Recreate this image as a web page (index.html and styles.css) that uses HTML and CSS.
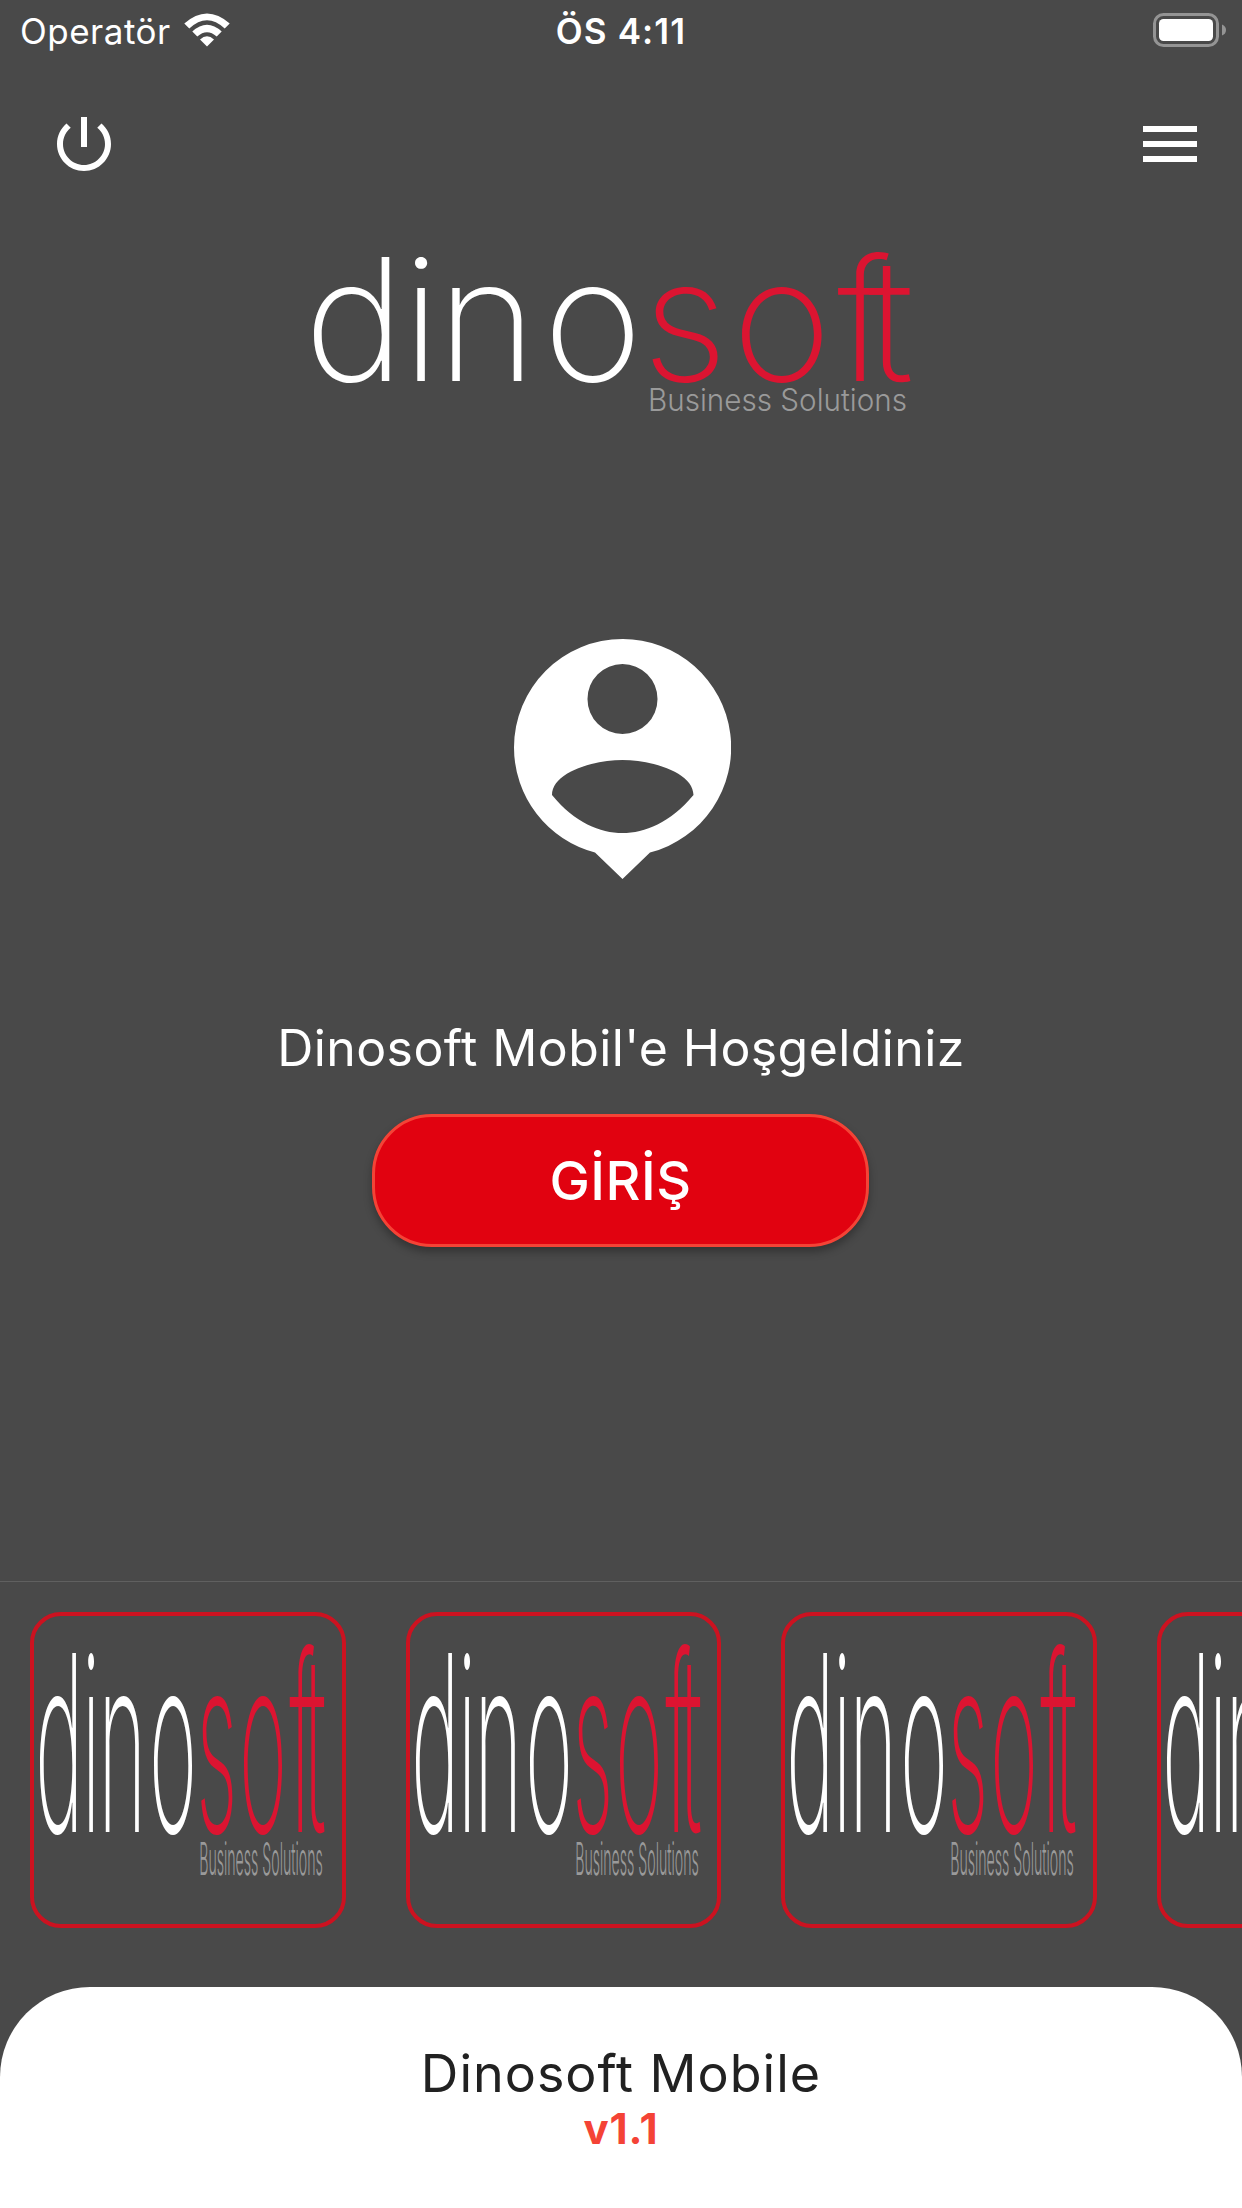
FILE: index.html
```html
<!DOCTYPE html>
<html lang="tr">
<head>
  <meta charset="UTF-8" />
  <meta name="viewport" content="width=device-width, initial-scale=1.0"/>
  <title>Dinosoft Mobile</title>
  <link rel="stylesheet" href="styles.css">
</head>
<body>
  <div class="screen">
    <div class="status-bar">
      <div class="carrier">
        <span>Operatör</span>
        <svg class="wifi" viewBox="0 0 46 34">
          <path d="M.3 10.500Q23-9.500 45.700 10.500L40.700 15.500Q23-1 5.300 15.500Z"/>
          <path d="M8.300 18.500Q23 5 37.700 18.500L32.700 23.500Q23 14.800 13.300 23.500Z"/>
          <path d="M16 26.500Q23 20 30 26.500L23 33.500Z"/>
        </svg>
      </div>
      <div class="time">ÖS 4:11</div>
      <svg class="battery" viewBox="0 0 74 34">
        <rect class="battery-case" x="1.500" y="1.500" width="63" height="31" rx="9"/>
        <rect x="6" y="6" width="54" height="22" rx="4.500"/>
        <path class="battery-tip" d="M69 11.500Q73 13 73 17T69 22.500Z"/>
      </svg>
    </div>

    <header class="toolbar">
      <svg class="icon" viewBox="0 0 24 24"><path d="M13 3h-2v10h2V3zm4.830 2.170l-1.420 1.420C17.990 7.860 19 9.810 19 12c0 3.870-3.130 7-7 7s-7-3.130-7-7c0-2.190 1.010-4.140 2.580-5.420L6.170 5.170C4.230 6.820 3 9.260 3 12c0 4.970 4.030 9 9 9s9-4.030 9-9c0-2.740-1.230-5.180-3.170-6.830z"/></svg>
      <svg class="icon" viewBox="0 0 24 24"><path d="M3 18h18v-2H3v2zm0-5h18v-2H3v2zm0-7v2h18V6H3z"/></svg>
    </header>

    <main class="welcome">
      <svg class="logo" viewBox="0 0 606 158" preserveAspectRatio="none">
        <text class="word" y="126" x="-8 90 125 231">dino</text>
        <text class="word red" y="126" x="330 420 525 556">soft</text>
        <text class="tagline" x="336" y="156" textLength="259" lengthAdjust="spacingAndGlyphs">Business Solutions</text>
      </svg>
      <svg class="person" viewBox="0 0 217 240">
        <path fill-rule="evenodd" d="M108.500 0A108.500 108.500 0 0 1 136 213.500L108.500 240L81 213.500A108.500 108.500 0 0 1 0 108.500A108.500 108.500 0 0 1 108.500 0ZM108.500 25a35 35 0 1 0 0 70a35 35 0 1 0 0-70ZM38 156C61 184 86 194 108.500 194S156 184 179.500 156C179.500 134 139 121 108.500 121S38 134 38 156Z"/>
      </svg>
      <p class="greeting">Dinosoft Mobil'e Hoşgeldiniz</p>
      <button class="login-btn">GİRİŞ</button>
    </main>

    <section class="cards">
      <div class="card">
        <svg class="card-logo" viewBox="0 0 606 158" preserveAspectRatio="none">
          <text class="word" y="126" x="-8 90 125 231">dino</text>
          <text class="word red" y="126" x="330 420 525 556">soft</text>
          <text class="tagline" x="336" y="156" textLength="259" lengthAdjust="spacingAndGlyphs">Business Solutions</text>
        </svg>
      </div>
      <div class="card">
        <svg class="card-logo" viewBox="0 0 606 158" preserveAspectRatio="none">
          <text class="word" y="126" x="-8 90 125 231">dino</text>
          <text class="word red" y="126" x="330 420 525 556">soft</text>
          <text class="tagline" x="336" y="156" textLength="259" lengthAdjust="spacingAndGlyphs">Business Solutions</text>
        </svg>
      </div>
      <div class="card">
        <svg class="card-logo" viewBox="0 0 606 158" preserveAspectRatio="none">
          <text class="word" y="126" x="-8 90 125 231">dino</text>
          <text class="word red" y="126" x="330 420 525 556">soft</text>
          <text class="tagline" x="336" y="156" textLength="259" lengthAdjust="spacingAndGlyphs">Business Solutions</text>
        </svg>
      </div>
      <div class="card">
        <svg class="card-logo" viewBox="0 0 606 158" preserveAspectRatio="none">
          <text class="word" y="126" x="-8 90 125 231">dino</text>
          <text class="word red" y="126" x="330 420 525 556">soft</text>
          <text class="tagline" x="336" y="156" textLength="259" lengthAdjust="spacingAndGlyphs">Business Solutions</text>
        </svg>
      </div>
    </section>

    <footer class="footer">
      <div class="app-name">Dinosoft Mobile</div>
      <div class="version">v1.1</div>
    </footer>
  </div>
</body>
</html>
```
FILE: styles.css
```css
* {
  box-sizing: border-box;
}
body {
  margin: 0;
  background: #494949;
  color: #fff;
  font-family: Inter, "Liberation Sans", sans-serif;
}
.screen {
  display: flex;
  flex-direction: column;
  height: 2208px;
  overflow: hidden;
}
svg {
  display: block;
  fill: #fff;
}
.status-bar {
  display: grid;
  grid-template-columns: 1fr auto 1fr;
  align-items: center;
  height: 62px;
  padding: 0 15px;
  font-size: 35px;
}
.carrier {
  display: flex;
  align-items: center;
  gap: 13px;
  padding-left: 5px;
  letter-spacing: 0.5px;
}
.wifi {
  width: 46px;
  height: 34px;
  margin-bottom: 3px;
}
.time {
  font-weight: 600;
  letter-spacing: 1.1px;
}
.battery {
  justify-self: end;
  width: 74px;
  height: 34px;
  margin-bottom: 2px;
}
.battery-case {
  fill: none;
  stroke: #949494;
  stroke-width: 3;
}
.battery-tip {
  fill: #949494;
}
.toolbar {
  display: flex;
  justify-content: space-between;
  height: 193px;
  padding: 46px 36px 0 48px;
}
.icon {
  width: 72px;
  height: 72px;
}
.welcome {
  display: flex;
  flex-direction: column;
  align-items: center;
  height: 1326px;
}
.logo {
  width: 606px;
  height: 158px;
  margin-right: 12px;
  overflow: visible;
}
.word {
  font-size: 170px;
  font-weight: 200;
}
.red {
  fill: #dc1431;
}
.tagline {
  font-size: 31px;
  font-weight: 300;
  fill: #9a9a9a;
}
.person {
  width: 217px;
  height: 240px;
  margin: 226px 0 0 2px;
}
.greeting {
  margin: 137px 0 0;
  font-size: 50px;
  line-height: 64px;
  letter-spacing: 0.4px;
  white-space: nowrap;
}
.login-btn {
  width: 497px;
  height: 133px;
  margin: 34px 1px 0 0;
  border: 3px solid #f44336;
  border-radius: 60px;
  background: #e10210;
  color: #fff;
  font-family: inherit;
  font-size: 54px;
  font-weight: 500;
  letter-spacing: 0.5px;
  box-shadow: 0 5px 8px rgba(0, 0, 0, 0.3);
}
.cards {
  display: flex;
  gap: 60px;
  height: 406px;
  padding: 30px 0 0 30px;
  border-top: 1px solid #606060;
}
.card {
  flex: none;
  width: 315.500px;
  height: 316px;
  padding: 33px 0 0 5px;
  border: 4px solid #cc1220;
  border-radius: 31px;
}
.card-logo {
  width: 289px;
  height: 229px;
  overflow: visible;
}
.footer {
  flex: 1;
  padding-top: 55px;
  border-radius: 90px 90px 0 0;
  background: #fff;
  color: #212121;
  text-align: center;
}
.app-name {
  font-size: 52px;
  line-height: 64px;
  letter-spacing: 1px;
}
.version {
  color: #f44336;
  font-size: 42px;
  font-weight: 700;
  line-height: 46px;
  letter-spacing: 0.8px;
}
```
